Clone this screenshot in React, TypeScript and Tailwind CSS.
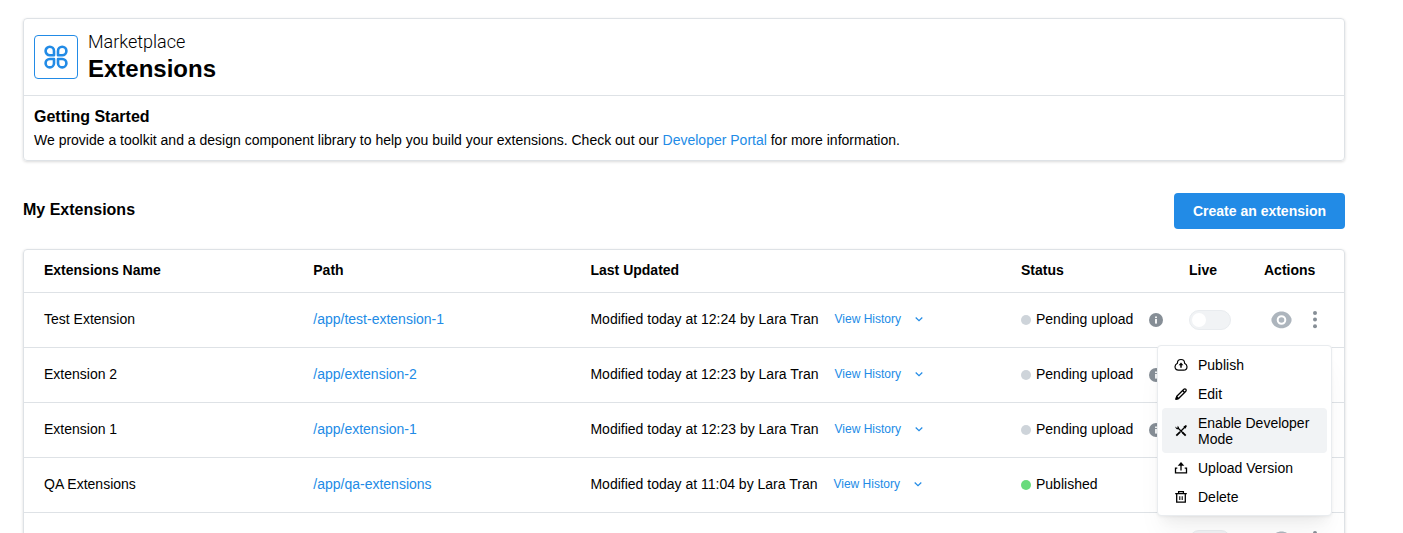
import React from "react";

type Row = {
  id: string;
  name?: string;
  path?: string;
  updated?: string;
  status?: "Pending upload" | "Published";
};

const rows: Row[] = [
  { id: "1", name: "Test Extension", path: "/app/test-extension-1", updated: "Modified today at 12:24 by Lara Tran", status: "Pending upload" },
  { id: "2", name: "Extension 2", path: "/app/extension-2", updated: "Modified today at 12:23 by Lara Tran", status: "Pending upload" },
  { id: "3", name: "Extension 1", path: "/app/extension-1", updated: "Modified today at 12:23 by Lara Tran", status: "Pending upload" },
  { id: "4", name: "QA Extensions", path: "/app/qa-extensions", updated: "Modified today at 11:04 by Lara Tran", status: "Published" },
  { id: "5" },
];

function PetalsIcon() {
  return (
    <svg className="size-6" viewBox="0 0 24 24" fill="none" stroke="currentColor" strokeWidth="2.6" strokeLinejoin="round" aria-hidden="true">
      <path d="M10 10.2H5.8A4.2 4.2 0 1 1 10 6Z" />
      <path d="M14 10.2h4.2A4.2 4.2 0 1 0 14 6Z" />
      <path d="M10 14H5.800A4.200 4.200 0 1 0 10 18.200Z" />
      <path d="M14 14h4.200A4.200 4.200 0 1 1 14 18.200Z" />
    </svg>
  );
}

function InfoIcon() {
  return (
    <svg className="size-3.5 shrink-0" viewBox="0 0 14 14" role="img" aria-label="Details">
      <circle cx="7" cy="7" r="7" fill="#868e96" />
      <rect x="6.1" y="3.5" width="1.8" height="1.6" fill="#fff" />
      <rect x="6.1" y="6" width="1.8" height="4.600" fill="#fff" />
    </svg>
  );
}

function EyeIcon() {
  return (
    <svg className="h-[18px] w-[21px]" viewBox="0 0 21 18" aria-hidden="true">
      <path fill="#adb5bd" d="M10.500.5C6 .5 2.400 3 .7 7.200q-.7 1.800 0 3.600C2.400 15 6 17.300 10.500 17.300S18.600 15 20.300 10.800q.7-1.800 0-3.600C18.600 3 15 .5 10.500.5Z" />
      <circle cx="10.500" cy="9" r="3.800" fill="none" stroke="#fff" strokeWidth="2" />
    </svg>
  );
}

function DotsIcon() {
  return (
    <svg className="h-[18px] w-1" viewBox="0 0 4 18" fill="#868e96" aria-hidden="true">
      <circle cx="2" cy="2" r="2" />
      <circle cx="2" cy="8.600" r="2" />
      <circle cx="2" cy="15.200" r="2" />
    </svg>
  );
}

function ChevronIcon() {
  return (
    <svg className="size-2" viewBox="0 0 8 8" fill="none" stroke="currentColor" strokeWidth="1.200" aria-hidden="true">
      <path d="M.7 2.500 4 5.700l3.300-3.200" />
    </svg>
  );
}

const iconClass = "size-3.5 shrink-0";

function PublishIcon() {
  return (
    <svg className={iconClass} viewBox="0 0 14 14" fill="none" stroke="currentColor" strokeWidth="1.200" aria-hidden="true">
      <path d="M3.400 5.200C3.400 2.800 5 1.500 7 1.500s3.600 1.300 3.600 3.700c1.600.9 2.400 2.200 2.400 3.600 0 2-1.400 3.400-3.400 3.400H4.400C2.400 12.200 1 10.800 1 8.800 1 7.400 1.800 6.100 3.400 5.200Z" />
      <path d="M7 9.800V6.500" strokeWidth="1.500" />
      <path d="M7 4.400 9.400 7.300H4.600Z" fill="currentColor" stroke="none" />
    </svg>
  );
}

function EditIcon() {
  return (
    <svg className={iconClass} viewBox="0 0 14 14" fill="none" stroke="currentColor" strokeWidth="1.300" strokeLinejoin="round" aria-hidden="true">
      <path d="M2 12.200 2.800 9.300 9.900 2.300a1.250 1.250 0 0 1 1.900 1.900L4.800 11.300Z" />
      <path d="m8.600 3.500 2 2" />
      <path d="m2 12.200.7-2.400 1.800 1.700Z" fill="currentColor" />
    </svg>
  );
}

function ToolsIcon() {
  return (
    <svg className={iconClass} viewBox="0 0 14 14" fill="none" stroke="currentColor" strokeWidth="1.300" aria-hidden="true">
      <path d="m11.500 2.500-5 5" />
      <path d="m6.200 7.800-3.900 3.900" strokeWidth="1.800" />
      <path d="m4 4 5 5" />
      <path d="m8.500 8.500 3.200 3.200" strokeWidth="1.800" />
      <path d="M1.500 2.500A2.200 2.200 0 0 0 4.700 5 2.200 2.200 0 0 0 3.100 1.700L3.900 3.100 2.900 4Z" fill="currentColor" stroke="none" />
      <path d="m10.400 2.800 1.400-.9.300.3-.9 1.400Z" fill="currentColor" />
    </svg>
  );
}

function UploadIcon() {
  return (
    <svg className={iconClass} viewBox="0 0 14 14" fill="none" stroke="currentColor" strokeWidth="1.300" aria-hidden="true">
      <path d="M3.300 7.100H1.500v4.800h11V7.100h-1.800" />
      <path d="M7 9.400V4" />
      <path d="m7 1 3.300 3.700H3.700Z" fill="currentColor" stroke="none" />
    </svg>
  );
}

function DeleteIcon() {
  return (
    <svg className={iconClass} viewBox="0 0 14 14" fill="none" stroke="currentColor" strokeWidth="1.300" aria-hidden="true">
      <path d="M1.200 3.700h11.600M4.600 3.700V1.600h4.800v2.100M2.700 3.700v8.500h8.600V3.700" />
      <path d="M5.800 6.300v3.600M8.200 6.300v3.600" strokeWidth="1.100" />
    </svg>
  );
}

function ActionMenu() {
  const items = [
    { label: "Publish", icon: <PublishIcon /> },
    { label: "Edit", icon: <EditIcon /> },
    { label: "Enable Developer Mode", icon: <ToolsIcon />, active: true },
    { label: "Upload Version", icon: <UploadIcon /> },
    { label: "Delete", icon: <DeleteIcon /> },
  ];
  return (
    <div role="menu" className="absolute top-full right-3 z-10 -mt-0.5 w-[175px] rounded border border-[#e9ecef] bg-white p-1 shadow-[0_1px_3px_rgba(0,0,0,0.05),0_20px_25px_-5px_rgba(0,0,0,0.05),0_10px_10px_-5px_rgba(0,0,0,0.04)]">
      {items.map((item) => (
        <button
          key={item.label}
          role="menuitem"
          type="button"
          className={`flex w-full items-center gap-2.5 rounded px-3 pt-[7px] pb-1.5 text-left text-sm leading-4 ${item.active ? "bg-[#f1f3f5]" : ""}`}
        >
          {item.icon}
          <span>{item.label}</span>
        </button>
      ))}
    </div>
  );
}

function Switch({ label }: { label: string }) {
  return (
    <label className="flex w-[42px]">
      <input type="checkbox" role="switch" aria-label={label} className="peer sr-only" disabled />
      <span className="flex h-5 w-full items-center rounded-full border border-[#e9ecef] bg-[#f1f3f5] px-0.5">
        <span className="size-3.5 rounded-full bg-white" />
      </span>
    </label>
  );
}

export default function App() {
  return (
    <main className="h-screen overflow-hidden bg-white pt-[18px] pr-[58px] pl-[23px] font-['Liberation_Sans',Arial,sans-serif] text-sm text-black">
      <section className="rounded border border-[#dee2e6] shadow-[0_1px_3px_rgba(0,0,0,0.15)]">
        <header className="flex gap-2.5 border-b border-[#dee2e6] px-2.5 pt-[11px] pb-3">
          <div className="mt-[5px] flex size-11 items-center justify-center rounded border border-[#228be6] text-[#228be6]">
            <PetalsIcon />
          </div>
          <div>
            <p className="font-[Roboto,sans-serif] text-lg leading-6 font-light">Marketplace</p>
            <h1 className="mt-px text-2xl leading-7 font-bold">Extensions</h1>
          </div>
        </header>
        <div className="px-2.5 py-[9px]">
          <h2 className="text-base leading-6 font-bold">Getting Started</h2>
          <p className="leading-[22px]">
            We provide a toolkit and a design component library to help you build your extensions. Check out our{" "}
            <a href="#portal" className="text-[#228be6]">Developer Portal</a> for more information.
          </p>
        </div>
      </section>

      <div className="mt-8 flex items-center justify-between">
        <h2 className="pb-0.5 text-base leading-6 font-bold">My Extensions</h2>
        <button type="button" className="h-9 rounded bg-[#228be6] px-[19px] text-sm font-bold text-white">
          Create an extension
        </button>
      </div>

      <div className="mt-5 rounded border border-[#dee2e6] shadow-[0_1px_3px_rgba(0,0,0,0.15)]">
        <table className="w-full table-fixed border-collapse text-left">
          <thead>
            <tr className="h-[42px] border-b border-[#dee2e6]">
              <th className="w-[20.4%] pb-0.5 pl-5">Extensions Name</th>
              <th className="w-[21%] pb-0.5 pl-5">Path</th>
              <th className="pb-0.5 pl-5">Last Updated</th>
              <th className="w-[168px] pb-0.5 pl-5">Status</th>
              <th className="w-[75px] pb-0.5 pl-5">Live</th>
              <th className="w-[100px] pb-0.5 pl-5">Actions</th>
            </tr>
          </thead>
          <tbody>
            {rows.map((row, index) => (
              <tr key={row.id} className="h-[55px] border-b border-[#dee2e6]">
                <td className="pb-0.5 pl-5">{row.name}</td>
                <td className="pb-0.5 pl-5">
                  {row.path && <a href={row.path} className="text-[#228be6]">{row.path}</a>}
                </td>
                <td className="pb-0.5 pl-5">
                  {row.updated && (
                    <div className="flex items-center whitespace-nowrap">
                      <span>{row.updated}</span>
                      <button type="button" className="ml-4 flex items-center gap-3.5 text-xs text-[#228be6]">
                        View History
                        <ChevronIcon />
                      </button>
                    </div>
                  )}
                </td>
                <td className="pr-1.5 pl-5">
                  {row.status && (
                    <div className="flex items-center whitespace-nowrap">
                      <span className={`mr-[5px] size-2.5 rounded-full ${row.status === "Published" ? "bg-[#69db7c]" : "bg-[#ced4da]"}`} />
                      <span className="grow pb-0.5">{row.status}</span>
                      {row.status === "Pending upload" && <InfoIcon />}
                    </div>
                  )}
                </td>
                <td className="pl-5">
                  <Switch label="Live" />
                </td>
                <td className="relative pl-[27px]">
                  <div className="flex items-center gap-[21px]">
                    <button type="button" aria-label="Preview">
                      <EyeIcon />
                    </button>
                    <button type="button" aria-label="More actions">
                      <DotsIcon />
                    </button>
                  </div>
                  {index === 0 && <ActionMenu />}
                </td>
              </tr>
            ))}
          </tbody>
        </table>
      </div>
    </main>
  );
}
